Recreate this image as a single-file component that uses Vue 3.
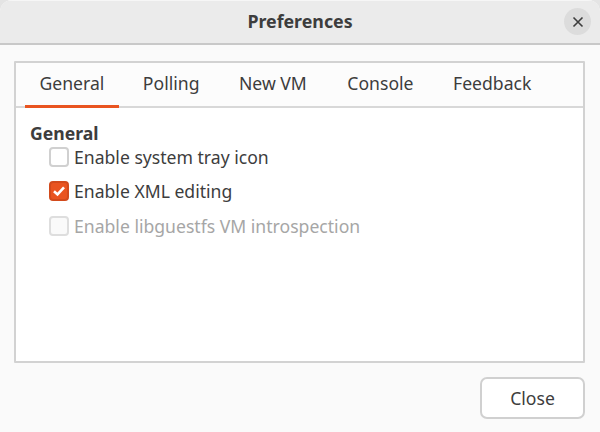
<script setup>
const tabs = ['General', 'Polling', 'New VM', 'Console', 'Feedback']
const options = [
  { label: 'Enable system tray icon', checked: false, disabled: false },
  { label: 'Enable XML editing', checked: true, disabled: false },
  { label: 'Enable libguestfs VM introspection', checked: false, disabled: true },
]
</script>

<template>
  <div class="window">
    <header class="titlebar">
      <span class="title">Preferences</span>
      <button class="win-close" aria-label="Close window">
        <svg width="12" height="12" viewBox="0 0 12 12"><path d="M1.5 1.5 10.5 10.5M10.5 1.5 1.5 10.5" stroke="#3d3d3d" stroke-width="1.6" fill="none"/></svg>
      </button>
    </header>
    <main class="content">
      <section class="panel">
        <nav class="tabs">
          <div v-for="(t, i) in tabs" :key="t" class="tab" :class="{ active: i === 0 }">{{ t }}</div>
        </nav>
        <div class="page">
          <div class="heading">General</div>
          <div class="options">
            <label v-for="o in options" :key="o.label" class="option" :class="{ disabled: o.disabled }">
              <span class="box" :class="{ checked: o.checked }">
                <svg v-if="o.checked" width="16" height="16" viewBox="0 0 16 16"><path d="M3 8.2 6.5 11.4 13 4.4" stroke="#fff" stroke-width="2.6" fill="none"/></svg>
              </span>
              <span>{{ o.label }}</span>
            </label>
          </div>
        </div>
      </section>
      <footer class="actions">
        <button class="close">Close</button>
      </footer>
    </main>
  </div>
</template>

<style>
html, body { margin: 0; background: #e4e4e4; }
</style>

<style scoped>
.window {
  width: 600px;
  height: 432px;
  box-sizing: border-box;
  display: flex;
  flex-direction: column;
  border-radius: 12px 12px 0 0;
  overflow: hidden;
  background: #fafafa;
  font-family: "Noto Sans", "Open Sans", sans-serif;
  font-size: 17.6px;
  color: #3d3d3d;
}
.titlebar {
  height: 45px;
  flex: none;
  box-sizing: border-box;
  display: flex;
  align-items: center;
  justify-content: center;
  position: relative;
  background: #ebebeb;
  border-top: 1px solid #f6f6f6;
  border-bottom: 2px solid #c8c8c8;
}
.title { font-weight: 700; font-size: 17.8px; margin-top: -2px; }
.win-close {
  position: absolute;
  right: 9px;
  top: 7px;
  width: 27px;
  height: 27px;
  padding: 0;
  border: 0;
  border-radius: 50%;
  background: #dcdcdc;
  display: flex;
  align-items: center;
  justify-content: center;
}
.content {
  flex: 1;
  display: flex;
  flex-direction: column;
  padding: 16px 15px 13px 14px;
}
.panel {
  height: 302px;
  box-sizing: border-box;
  flex: none;
  border: 2px solid #d2d2d2;
  border-radius: 1px;
  background: #fff;
  display: flex;
  flex-direction: column;
}
.tabs {
  height: 45px;
  box-sizing: border-box;
  flex: none;
  display: flex;
  gap: 9.5px;
  padding: 0 9px;
  background: #fcfcfc;
  border-bottom: 2px solid #d8d8d8;
}
.tab {
  padding: 0 14.5px;
  height: 45px;
  box-sizing: border-box;
  line-height: 41px;
}
.tab:nth-child(3) { margin-left: 1px; }
.tab:nth-child(4) { margin-left: 2px; }
.tab:nth-child(5) { margin-left: 1px; }
.tab.active { border-bottom: 3px solid #e95420; }
.page { padding: 15px 14px; }
.heading { font-weight: 700; line-height: 20px; }
.options {
  display: flex;
  flex-direction: column;
  gap: 11.5px;
  padding: 2px 0 0 19px;
}
.option {
  display: flex;
  align-items: center;
  gap: 5px;
  height: 23px;
}
.option.disabled { color: #a6a6a6; }
.box {
  width: 20px;
  height: 20px;
  box-sizing: border-box;
  border: 2px solid #d0d0d0;
  border-radius: 4px;
  background: #fff;
  display: flex;
  align-items: center;
  justify-content: center;
  flex: none;
}
.box.checked { background: #e95420; border-color: #d24a1c; }
.disabled .box { background: #fafafa; border-color: #dedede; }
.actions {
  flex: 1;
  display: flex;
  justify-content: flex-end;
  align-items: flex-end;
}
.close {
  width: 105px;
  height: 42px;
  box-sizing: border-box;
  border: 2px solid #d0d0d0;
  border-radius: 7px;
  background: #fff;
  font: inherit;
  color: inherit;
}
</style>
